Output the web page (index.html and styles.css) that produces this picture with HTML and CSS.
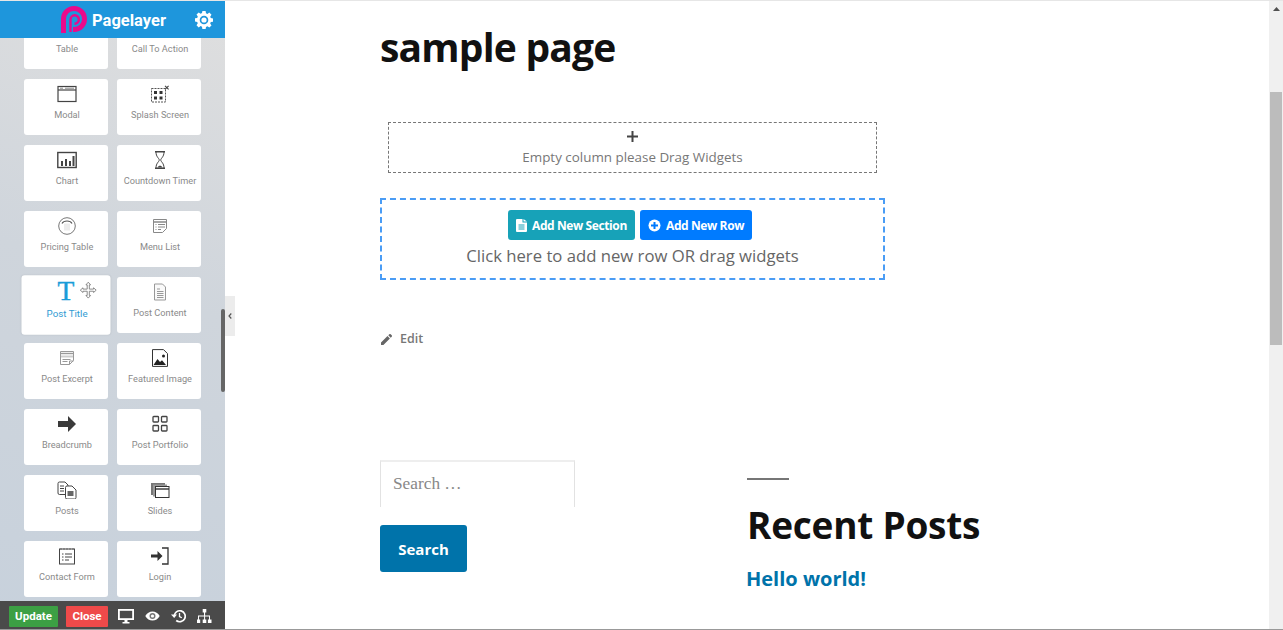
FILE: index.html
```html
<!DOCTYPE html>
<html lang="en">
<head>
<meta charset="utf-8">
<title>Pagelayer editor</title>
<link rel="stylesheet" href="styles.css">
</head>
<body>
<aside class="sidebar">
  <header class="brand">
    <svg class="brand-logo" width="28" height="28" viewBox="0 0 28 28"><path d="M3.500 27V13a10.500 10.500 0 1 1 10.500 10.500h-1" fill="none" stroke="#ea0a8c" stroke-width="5"/><path d="M10.500 26V13.500a4.200 4.200 0 1 1 4 4.200" fill="none" stroke="#ea0a8c" stroke-width="2.400"/></svg>
    <span class="brand-name">Pagelayer</span>
    <svg class="brand-gear" width="18" height="18" viewBox="0 0 18 18"><path d="M7.4 0h3.2l.4 2.3 1.4.6 1.9-1.3 2.2 2.2-1.3 1.9.6 1.4 2.2.4v3.2l-2.2.4-.6 1.4 1.3 1.9-2.2 2.2-1.9-1.3-1.4.6-.4 2.3H7.4L7 15.700l-1.4-.6-1.9 1.300-2.200-2.200 1.300-1.900-.6-1.400L0 10.500V7.300l2.200-.4.6-1.400-1.300-1.900 2.200-2.200 1.900 1.300 1.400-.6z" fill="#fff"/><circle cx="9" cy="9" r="4.300" fill="#1e96dc"/><circle cx="9" cy="9" r="2.600" fill="#fff"/></svg>
  </header>
  <div class="widgets">
    <div class="widget-grid">
      <div class="card"><span class="label">Table</span></div>
      <div class="card"><span class="label">Call To Action</span></div>

      <div class="card">
        <svg class="icon" viewBox="0 0 20 18"><rect x="1" y="1.500" width="18" height="15" fill="#fff" stroke="#444" stroke-width="1.200"/><path d="M1 5h18" stroke="#444" stroke-width="1.200"/><path d="M3 3.200h3M8 3.200h9" stroke="#888"/></svg>
        <span class="label">Modal</span>
      </div>
      <div class="card">
        <svg class="icon" viewBox="0 0 20 18"><rect x="1.500" y="3.500" width="14" height="13.500" fill="none" stroke="#555" stroke-dasharray="2 1"/><g fill="#333"><rect x="4" y="6" width="3" height="3"/><rect x="9.500" y="6" width="3" height="3"/><rect x="4" y="11.500" width="3" height="3"/><rect x="9.500" y="11.500" width="3" height="3"/></g><path d="M15 .8l3.600 3.600M18.600.8L15 4.400" stroke="#444" stroke-width="1.100"/></svg>
        <span class="label">Splash Screen</span>
      </div>

      <div class="card">
        <svg class="icon" viewBox="0 0 20 18"><rect x=".8" y="1.500" width="18.400" height="15" fill="none" stroke="#444" stroke-width="1.400"/><path d="M4 10h2v5H4zM8 8h2v7H8zM12 10h2v5h-2zM15.500 5h2v10h-2z" fill="#444"/></svg>
        <span class="label">Chart</span>
      </div>
      <div class="card">
        <svg class="icon" viewBox="0 0 20 18"><path d="M5 .7h10M5 17.300h10" stroke="#444" stroke-width="1.400"/><path d="M6 1c0 5 3 6 3.300 8C9 11 6 12 6 17M14 1c0 5-3 6-3.300 8 .3 2 3.300 3 3.300 8" fill="none" stroke="#444"/><path d="M7.500 16.500c1-2.500 4-2.500 5 0z" fill="#444"/></svg>
        <span class="label">Countdown Timer</span>
      </div>

      <div class="card">
        <svg class="icon" viewBox="0 0 20 18"><circle cx="10" cy="9" r="8.300" fill="none" stroke="#777" stroke-width="1"/><path d="M5 6.500c1-2 3-2.500 5-2.500s4 .5 5 2.500" fill="none" stroke="#555" stroke-width="1.100"/><path d="M7 6.500h6v7H7z" fill="#ececec"/></svg>
        <span class="label">Pricing Table</span>
      </div>
      <div class="card">
        <svg class="icon" viewBox="0 0 20 18"><path d="M3.500 2.500h13v9l-4 4h-9z" fill="none" stroke="#888"/><path d="M3.500 5h13" stroke="#888" stroke-width="1.500"/><path d="M5.500 7.500h1M8 7.500h7M5.500 10h1M8 10h7M5.500 12.500h1M8 12.500h3" stroke="#888"/></svg>
        <span class="label">Menu List</span>
      </div>

      <div class="card is-dragged">
        <span class="title-glyph">T</span>
        <span class="label">Post Title</span>
        <svg class="move" width="16" height="16" viewBox="0 0 16 16"><path d="M8 .5l2.200 2.500H9v4h4V5.800L15.500 8 13 10.200V9H9v4h1.200L8 15.500 5.800 13H7V9H3v1.200L.5 8 3 5.800V7h4V3H5.800z" fill="#fff" stroke="#777" stroke-width=".8"/></svg>
      </div>
      <div class="card">
        <svg class="icon" viewBox="0 0 20 18"><path d="M4.500 1h8l3 3v13h-11z" fill="#fafafa" stroke="#999"/><path d="M7 6h3M7 8.500h6.500M7 10.500h6.500M7 12.500h6.500M7 14.500h6.500" stroke="#999"/></svg>
        <span class="label">Post Content</span>
      </div>

      <div class="card">
        <svg class="icon" viewBox="0 0 20 18"><path d="M3.500 2.500h13v9l-4 4h-9z" fill="none" stroke="#999"/><path d="M4 4.500h12" stroke="#999" stroke-width="1.400"/><path d="M4 6.500h12v2H4z" fill="#ccc"/><path d="M5.500 10.500h8M5.500 12.500h5" stroke="#999"/><path d="M12.500 15.500v-3.500h4" fill="none" stroke="#999"/></svg>
        <span class="label">Post Excerpt</span>
      </div>
      <div class="card">
        <svg class="icon" viewBox="0 0 20 18"><path d="M2.500 .6h11l4 4v12.800h-15z" fill="#fff" stroke="#333"/><path d="M3.500 16l4-6 2.500 3 2-1.800 4 4.800z" fill="#222"/><circle cx="13.500" cy="7" r="1.500" fill="#222"/></svg>
        <span class="label">Featured Image</span>
      </div>

      <div class="card">
        <svg class="icon" viewBox="0 0 20 18"><path d="M1 6h10V1l8 8-8 8v-5H1z" fill="#3a3a3a"/></svg>
        <span class="label">Breadcrumb</span>
      </div>
      <div class="card">
        <svg class="icon" viewBox="0 0 20 18"><g fill="none" stroke="#444" stroke-width="1.300"><rect x="3" y="1.500" width="5.500" height="5.500" rx=".8"/><rect x="11.500" y="1.500" width="5.500" height="5.500" rx=".8"/><rect x="3" y="10.500" width="5.500" height="5.500" rx=".8"/><rect x="11.500" y="10.500" width="5.500" height="5.500" rx=".8"/></g></svg>
        <span class="label">Post Portfolio</span>
      </div>

      <div class="card">
        <svg class="icon" viewBox="0 0 20 18"><path d="M1 2.500A1.500 1.500 0 0 1 2.500 1H8l3 3v9.500H2.500A1.500 1.500 0 0 1 1 12z" fill="#fff" stroke="#444"/><path d="M3 5h4M3 7.500h4M3 10h4" stroke="#444"/><path d="M8.500 6.500A1.500 1.500 0 0 1 10 5h5l4 4v7.500a1.500 1.500 0 0 1-1.500 1.500H10a1.500 1.500 0 0 1-1.500-1.500z" fill="#fff" stroke="#444"/><path d="M10.500 10h6v5h-6z" fill="#666"/></svg>
        <span class="label">Posts</span>
      </div>
      <div class="card">
        <svg class="icon" viewBox="0 0 20 18"><path d="M1 2h14v2H4v10H1z" fill="#777"/><path d="M3 3.500h14v2H6v10H3z" fill="#999"/><rect x="5.500" y="5.500" width="13.500" height="11" fill="#fff" stroke="#333"/><path d="M5.500 8h13.500" stroke="#333" stroke-width="1.400"/></svg>
        <span class="label">Slides</span>
      </div>

      <div class="card">
        <svg class="icon" viewBox="0 0 20 18"><rect x="2.500" y="2" width="15" height="15" fill="#fff" stroke="#444"/><path d="M4 1v2M7 1v2M10 1v2M13 1v2M16 1v2" stroke="#666"/><path d="M5 7h1.500M8 7h7M5 10h1.500M8 10h7M5 13h1.500M8 13h4" stroke="#444"/></svg>
        <span class="label">Contact Form</span>
      </div>
      <div class="card">
        <svg class="icon" viewBox="0 0 20 18"><path d="M12 1h6v16h-6" fill="none" stroke="#333" stroke-width="1.300"/><path d="M1 7.500h6.500V4l5 5-5 5v-3.500H1z" fill="#333"/></svg>
        <span class="label">Login</span>
      </div>
    </div>
    <div class="side-thumb"></div>
  </div>
  <footer class="toolbar">
    <span class="tool-btn is-update">Update</span>
    <span class="tool-btn is-close">Close</span>
    <div class="tool-icons">
      <svg width="16" height="15" viewBox="0 0 16 15"><path d="M0 0h16v11H0z" fill="#fff"/><path d="M1.800 1.800h12.400v7.400H1.800z" fill="#4a4a4a"/><path d="M6.500 11h3v2h2v1.500h-7V13h2z" fill="#fff"/></svg>
      <svg width="15" height="10" viewBox="0 0 15 10"><path d="M.3 5C2 2 4.500.5 7.500.5S13 2 14.700 5C13 8 10.500 9.500 7.500 9.500S2 8 .3 5z" fill="#fff"/><circle cx="7.500" cy="5" r="3" fill="#777"/><circle cx="7.500" cy="5" r="1.600" fill="#fff"/></svg>
      <svg width="15" height="14" viewBox="0 0 15 14"><path d="M3.200 7a5.500 5.500 0 1 1 2 4.500" fill="none" stroke="#fff" stroke-width="1.700"/><path d="M0 5.500h6L3.200 9z" fill="#fff"/><path d="M8.500 4v3.500l2.300 1.300" fill="none" stroke="#fff" stroke-width="1.300"/></svg>
      <svg width="15" height="15" viewBox="0 0 15 15"><path d="M5.700 0h3.600v3.600H8.100v2.900h4.900v3.900h1.500v3.600h-3.600v-3.600h1.100V7.500H8.100v2.900h1.200v3.600H5.700v-3.600h1.400V7.500H2v2.900h1.200v3.600H-.4v-3.600H1V6.500h6V3.600H5.700z" fill="#fff"/></svg>
    </div>
  </footer>
  <div class="side-tab">
    <svg width="4" height="6" viewBox="0 0 4 6"><path d="M3.300.5L1 3l2.300 2.500" fill="none" stroke="#555" stroke-width="1.200"/></svg>
  </div>
</aside>

<main class="content">
  <h1 class="page-title">sample page</h1>
  <section class="empty-col">
    <svg class="plus" width="11" height="11" viewBox="0 0 11 11"><path d="M5.500 0v11M0 5.500h11" stroke="#444" stroke-width="2"/></svg>
    <span>Empty column please Drag Widgets</span>
  </section>
  <section class="add-zone">
    <div class="add-buttons">
      <span class="add-btn is-section">
        <svg width="11" height="13" viewBox="0 0 11 13"><path d="M0 1a1 1 0 0 1 1-1h5.500v3.500H11V12a1 1 0 0 1-1 1H1a1 1 0 0 1-1-1z" fill="#fff"/><path d="M7.500 0L11 2.500H7.500z" fill="#fff"/><path d="M2.500 6h6M2.500 8h6M2.500 10h6" stroke="#17a2b8"/></svg>
        Add New Section
      </span>
      <span class="add-btn is-row">
        <svg width="13" height="13" viewBox="0 0 13 13"><circle cx="6.500" cy="6.500" r="6" fill="#fff"/><path d="M6.500 3v7M3 6.500h7" stroke="#007bff" stroke-width="2"/></svg>
        Add New Row
      </span>
    </div>
    <p class="add-hint">Click here to add new row OR drag widgets</p>
  </section>
  <a class="edit-link">
    <svg width="11" height="11" viewBox="0 0 11 11"><path d="M0 11V8.600L6.500 2.100l2.400 2.400L2.400 11zM7.300 1.300L8.300.3a1 1 0 0 1 1.400 0l1 1a1 1 0 0 1 0 1.400l-1 1z" fill="#666"/></svg>
    Edit
  </a>
  <div class="footer-widgets">
    <div class="search-col">
      <div class="search-field">Search …</div>
      <span class="search-btn">Search</span>
    </div>
    <div class="recent-col">
      <div class="rule"></div>
      <h2 class="recent-title">Recent Posts</h2>
      <a class="recent-link">Hello world!</a>
    </div>
  </div>
</main>

<div class="page-scroll">
  <svg class="page-arrow" width="7" height="4" viewBox="0 0 7 4"><path d="M3.500 0L7 4H0z" fill="#505050"/></svg>
  <div class="page-thumb"></div>
</div>
</body>
</html>
```

FILE: styles.css
```css
* { box-sizing: border-box; }
html, body { margin: 0; height: 630px; overflow: hidden; }
body {
  display: flex;
  width: 1283px;
  background: #fff;
  border-top: 1px solid #e6e6e6;
  border-bottom: 1px solid #999;
  font-family: "Open Sans", sans-serif;
}

/* sidebar */
.sidebar {
  position: relative;
  flex: 0 0 225px;
  display: flex;
  flex-direction: column;
  margin-top: -1px;
  margin-bottom: -1px;
  background: linear-gradient(20deg, #c7d1dc 0%, #cfd5dc 55%, #dfdfdf 100%);
  font-family: Roboto, sans-serif;
}
.brand {
  flex: 0 0 38px;
  display: flex;
  align-items: center;
  padding: 2px 12px 0 60px;
  background: #1e96dc;
}
.brand-logo { flex: none; margin-right: 4px; }
.brand-name { flex: 1; color: #fff; font-size: 16.500px; font-weight: 700; }
.widgets { flex: 1; position: relative; overflow: hidden; }
.widget-grid {
  display: grid;
  grid-template-columns: 84px 84px;
  grid-auto-rows: 56px;
  gap: 10px 9px;
  margin: -25px 0 0 24px;
}
.card {
  position: relative;
  display: flex;
  flex-direction: column;
  align-items: center;
  padding-top: 6px;
  background: #fff;
  border-radius: 3px;
}
.icon { display: block; width: 20px; height: 18px; margin-left: 1px; }
.label {
  position: absolute;
  left: 2px;
  right: 0;
  top: 30px;
  text-align: center;
  color: #8a8a8a;
  font-size: 9.200px;
  line-height: 12px;
  white-space: nowrap;
}
.is-dragged { transform: scale(1.06); box-shadow: 0 0 2px rgba(0, 0, 0, .08); }
.is-dragged .label { color: #2f9bd3; }
.title-glyph {
  color: #1a9cd8;
  font: 400 26px/20px "Liberation Serif", serif;
  margin-top: -1px;
  -webkit-text-stroke: .4px #1a9cd8;
}
.move { position: absolute; left: 55px; top: 6px; }
.side-thumb {
  position: absolute;
  right: 0;
  top: 271px;
  width: 4px;
  height: 83px;
  background: #666;
  border-radius: 2px;
}
.toolbar {
  flex: 0 0 29px;
  display: flex;
  align-items: center;
  padding: 1px 0 0 9px;
  background: #4a4a4a;
}
.tool-btn {
  display: flex;
  align-items: center;
  justify-content: center;
  height: 21px;
  color: #fff;
  font-size: 11.500px;
  font-weight: 700;
  border-radius: 1px;
}
.is-update { width: 49px; background: #3c9f44; margin-right: 8px; }
.is-close { width: 42px; background: #ef4a4a; margin-right: 10px; }
.tool-icons { display: flex; align-items: center; gap: 11px; }
.side-tab {
  position: absolute;
  left: 225px;
  top: 296px;
  width: 10px;
  height: 40px;
  display: flex;
  align-items: center;
  justify-content: center;
  background: #ececec;
}

/* page */
.content { flex: 1; padding-left: 155px; min-width: 0; color: #777; }
.page-title {
  margin: 17px 0 0;
  color: #111;
  font-size: 39px;
  font-weight: 700;
  line-height: 58px;
  letter-spacing: -.8px;
}
.empty-col {
  width: 489px;
  height: 51px;
  margin: 46px 0 0 8px;
  display: flex;
  flex-direction: column;
  align-items: center;
  padding-top: 8px;
  border: 1px dashed #777;
  font-size: 13.400px;
  line-height: 18px;
}
.plus { margin-bottom: 6px; }
.add-zone {
  width: 505px;
  height: 82px;
  margin-top: 25px;
  padding-top: 10px;
  border: 2px dashed #4a9cf5;
  text-align: center;
}
.add-buttons { display: flex; justify-content: center; gap: 5px; margin-right: 5px; }
.add-btn {
  display: flex;
  align-items: center;
  gap: 5px;
  height: 30px;
  padding: 0 8px;
  color: #fff;
  font-size: 12px;
  font-weight: 700;
  letter-spacing: -.4px;
  white-space: nowrap;
  border-radius: 3px;
}
.add-btn svg { flex: none; }
.is-section { width: 127px; background: #17a2b8; }
.is-row { width: 112px; background: #007bff; }
.add-hint { margin: 4px 0 0; color: #666; font-size: 16.700px; line-height: 24px; }
.edit-link {
  display: flex;
  align-items: center;
  gap: 8px;
  margin: 49px 0 0 1px;
  color: #777;
  font-size: 12.500px;
  font-weight: 600;
  line-height: 20px;
}
.footer-widgets { display: flex; margin-top: 111px; }
.search-col { flex: 0 0 367px; }
.search-field {
  width: 195px;
  height: 47px;
  padding: 10px 12px 0;
  border: 1px solid #e2e2e2;
  border-top: 2px solid #eee;
  border-bottom: 0;
  color: #888;
  font: 17.300px/24px "Liberation Serif", serif;
}
.search-btn {
  display: block;
  width: 87px;
  height: 47px;
  margin-top: 18px;
  background: #0073aa;
  border-radius: 3px;
  color: #fff;
  font-size: 15px;
  font-weight: 700;
  line-height: 49px;
  text-align: center;
}
.recent-col { flex: 1; padding-top: 18px; }
.rule { width: 42px; height: 2px; background: #767676; }
.recent-title {
  margin: 16px 0 0;
  color: #111;
  font-size: 37px;
  font-weight: 700;
  line-height: 58px;
  letter-spacing: -.25px;
}
.recent-link {
  display: block;
  margin: 11px 0 0 -1px;
  color: #0073aa;
  font-size: 20px;
  font-weight: 700;
  line-height: 28px;
}

/* page scrollbar */
.page-scroll {
  flex: 0 0 14px;
  position: relative;
  background: #f0f0f0;
}
.page-arrow { position: absolute; left: 4px; top: 6px; }
.page-thumb {
  position: absolute;
  left: 1px;
  right: 1px;
  top: 91px;
  height: 253px;
  background: #bcbcbc;
}
```
